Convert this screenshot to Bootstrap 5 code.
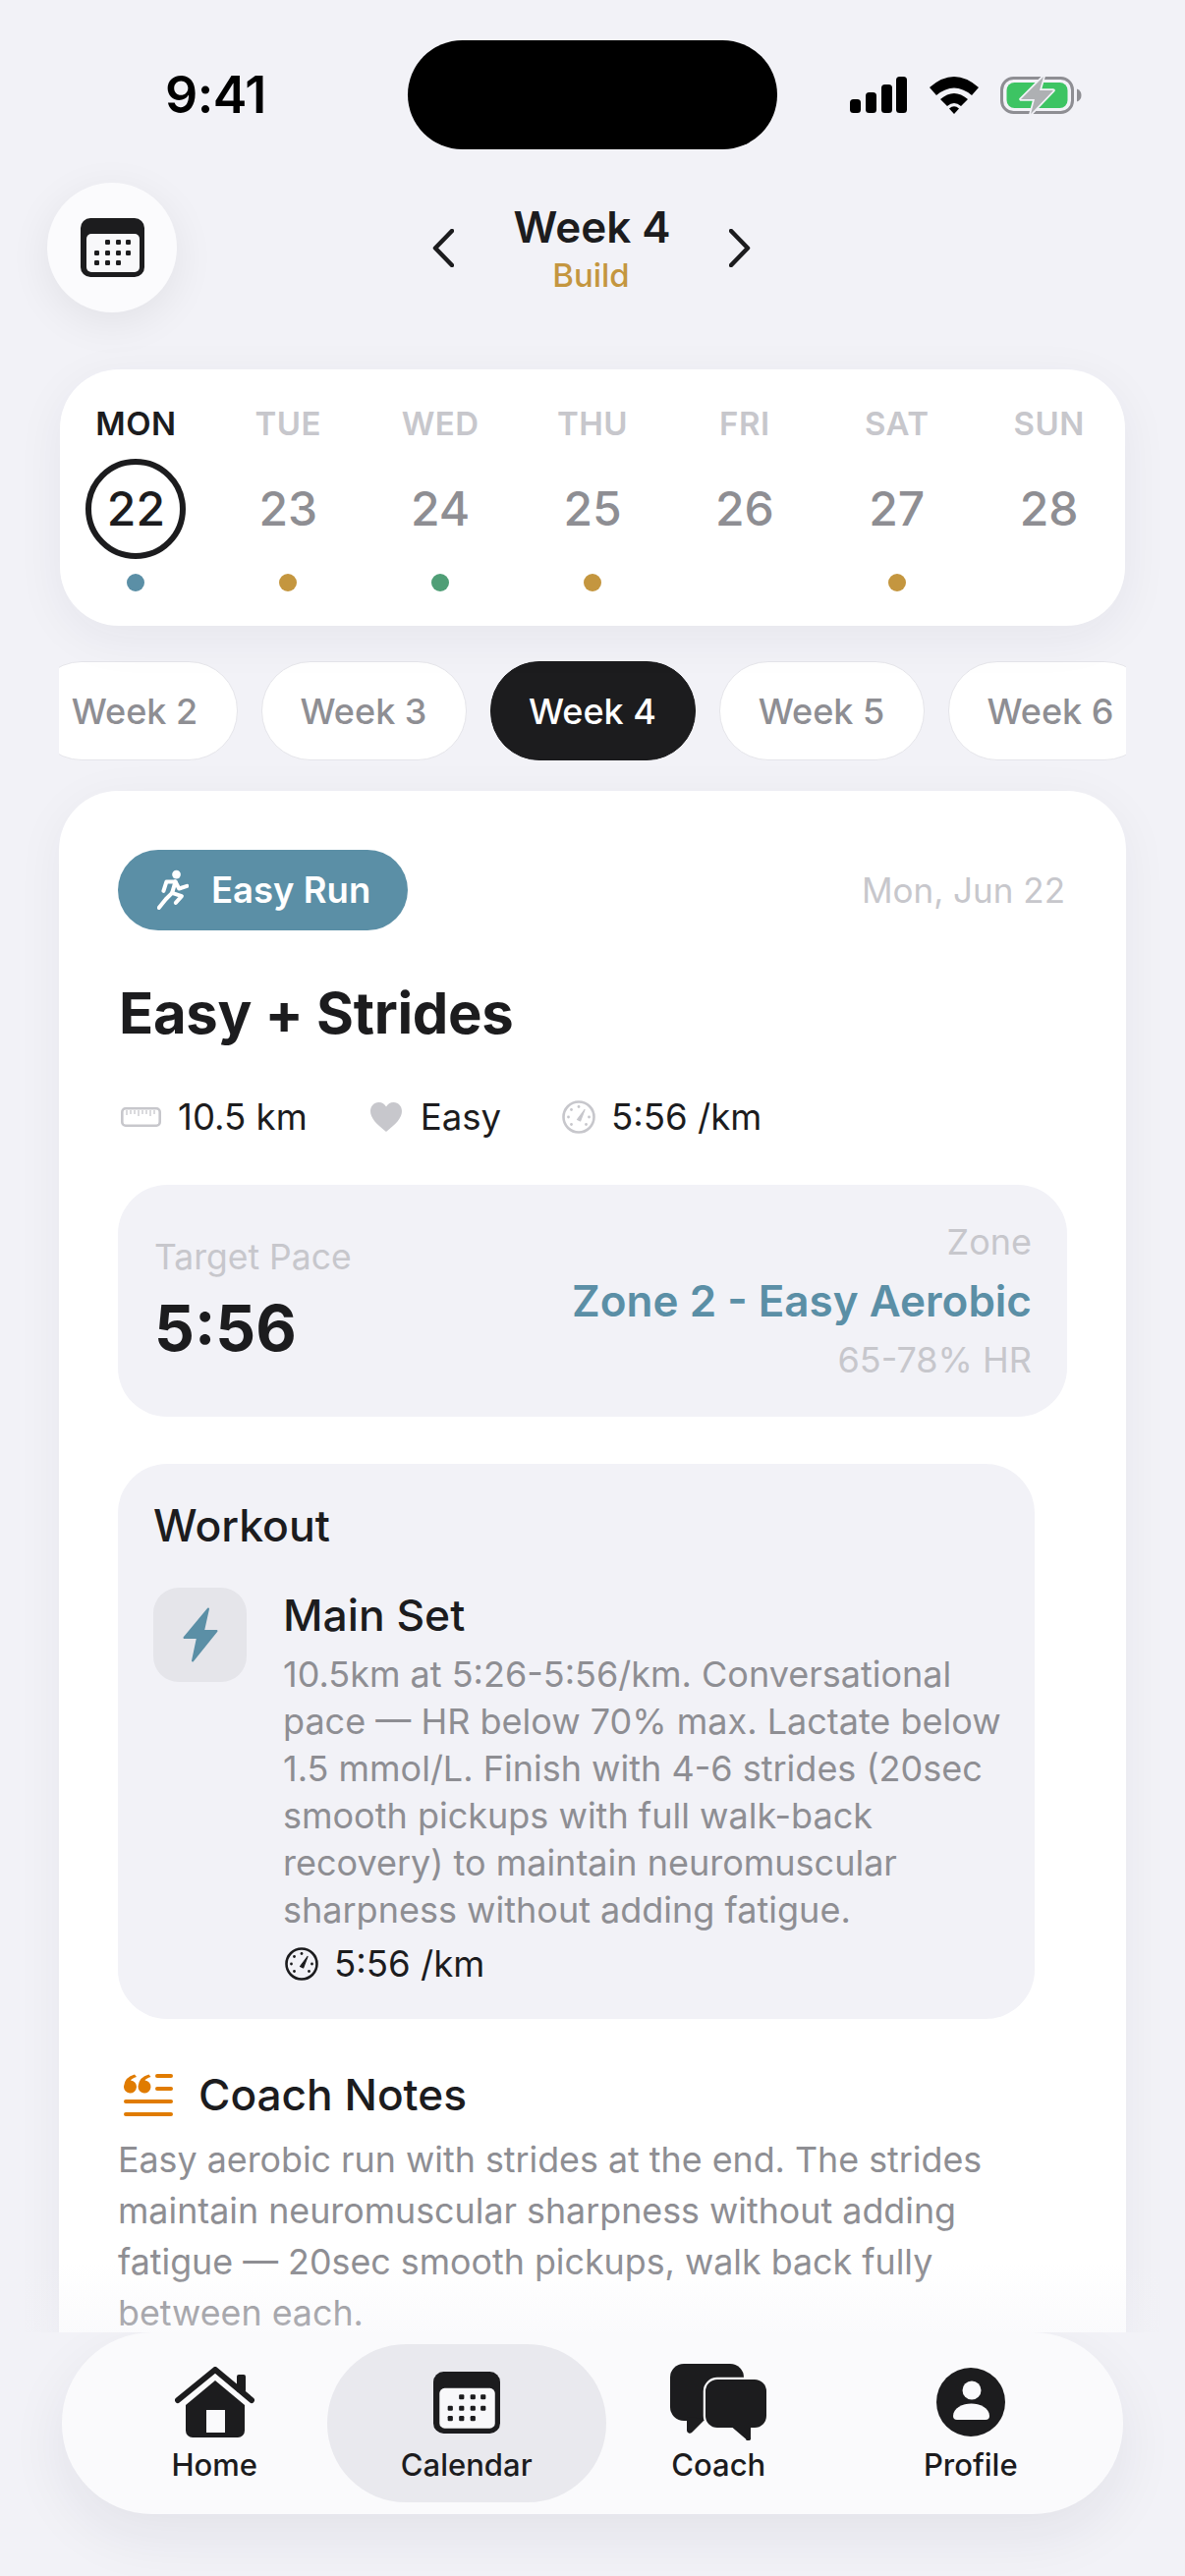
<!doctype html>
<html lang="en">
<head>
<meta charset="utf-8">
<title>Week 4 Calendar</title>
<link href="https://cdn.jsdelivr.net/npm/bootstrap@5.3.0/dist/css/bootstrap.min.css" rel="stylesheet">
<style>
html,body{margin:0;height:2622px;overflow:hidden}
body{background:#f2f2f7;font-family:Inter,"Noto Sans",sans-serif;color:#1c1c1e;width:1206px}
.phone{height:2622px;width:1206px}
.stat-row{padding-top:41px;height:152px}
.stat-time{width:415px;padding-left:168px;font-size:52px;font-weight:600;line-height:111px;letter-spacing:-.5px;color:#000;flex:none}
.island{width:376px;height:111px;background:#000;border-radius:56px;flex:none}
.stat-icons{padding-left:74px;height:111px;flex:none}
.head-row{margin-top:34px;display:grid;grid-template-columns:1fr auto 1fr;align-items:center;height:132px}
.cal-btn{width:132px;height:132px;margin-left:48px;background:#fbfbfd;box-shadow:0 10px 44px rgba(0,0,0,.07);border:0}
.head-mid{gap:61px;margin-left:-3px}
.wk-title{font-size:44px;font-weight:600;line-height:52px;margin:0}
.wk-sub{font-size:33px;font-weight:500;line-height:40px;color:#c4963f;margin-top:3px}
.week-card{margin:58px 61px 0;height:261px;padding:35px 0;background:#fff;border-radius:60px;box-shadow:0 12px 50px rgba(30,30,60,.06);border:0}
.day-col{flex:1 1 0;text-align:center}
.day-lbl{font-size:33px;line-height:40px;font-weight:600;letter-spacing:.5px;color:#c7c7cc;height:40px}
.day-lbl.on{color:#1c1c1e}
.day-num{width:102px;height:102px;margin:16px auto 0;font-size:48px;font-weight:500;line-height:90px;color:#8e8e93;border:6px solid transparent;border-radius:50%}
.day-num.on{color:#1c1c1e;border-color:#1c1c1e}
.day-dot{width:18px;height:18px;border-radius:50%;margin:15px auto 0}
.pill-strip{margin:36px 60px 0;gap:24px;overflow:hidden}
.wk-pill{flex:none;width:209px;height:101px;font-size:36px;font-weight:500;line-height:1;color:#8e8e93;background:#fff;border:1px solid #e5e5ea;border-radius:50px;padding:0}
.wk-pill.on{background:#1c1c1e;color:#fff;border-color:#1c1c1e}
.scroll-zone{height:2374px;overflow:hidden;position:relative}
.fade-over{position:absolute;left:0;right:0;bottom:0;height:70px;background:linear-gradient(rgba(242,242,247,0),rgba(242,242,247,.35));pointer-events:none}
.main-card{margin:31px 60px 0;padding:60px 60px 60px;background:#fff;border:0;border-radius:60px;box-shadow:0 10px 50px rgba(30,30,60,.05)}
.run-tag{height:82px;width:295px;padding-left:40px;gap:23px;border-radius:41px;background:#5b8fa6;color:#fff;font-size:36.5px;font-weight:600}
.date-txt{font-size:35px;color:#c7c7cc;margin-right:2px}
.ttl{font-size:58px;font-weight:700;line-height:70px;margin:49px 0 0;letter-spacing:-.3px;padding-left:1px}
.meta-row{margin-top:49px;height:44px;font-size:36.6px;line-height:44px;padding-left:3px}
.meta-a{gap:17px;margin-right:64px}
.pace-box{margin-top:47px;height:236px;padding:0 36px 0 37px;background:#f2f2f7;border-radius:50px}
.mute-lbl{font-size:35.5px;line-height:44px;color:#c7c7cc}
.pace-val{font-size:64px;font-weight:700;line-height:76px;margin-top:12px}
.zone-r{line-height:60px;text-align:right}
.zone-r .mute-lbl{line-height:60px;font-size:36px}
.zone-name{font-size:44px;font-weight:600;color:#5b8fa6;line-height:60px}
.wk-box{margin-top:48px;width:933px;padding:35px 24px 34px 36px;background:#f2f2f7;border-radius:50px}
.wk-h{font-size:44.5px;font-weight:500;line-height:56px;margin:0}
.set-row{margin-top:35px;gap:37px}
.set-ico{width:95px;height:96px;border-radius:26px;background:#e5e5ea;flex:none}
.set-h{font-size:44.4px;font-weight:500;line-height:56px;margin:0}
.set-txt{font-size:36px;line-height:48px;color:#8e8e93;margin:8px 0 0}
.set-pace{margin-top:9px;font-size:36.6px;line-height:44px;gap:16px;padding-left:2px}
.note-row{margin-top:49px;height:56px;gap:26px;padding-left:6px}
.note-h{font-size:44.2px;font-weight:500;line-height:56px;margin:0}
.note-txt{font-size:35.8px;line-height:52px;color:#8e8e93;margin:12px 0 0;width:940px}
.nav-zone{height:248px}
.tab-bar{margin:0 63px;height:185px;padding:12px 27px;background:#fafafc;border-radius:92px;box-shadow:0 22px 60px rgba(30,30,60,.07);display:grid;grid-template-columns:repeat(4,1fr)}
.tab-it{padding:19px 0 0;color:#1c1c1e;font-size:31px;font-weight:500;line-height:36px;border-radius:80px;text-decoration:none}
.tab-it.on{background:#e9e9ee;margin:0 -14px}
.tab-ico{height:80px;margin-bottom:6px}
</style>
</head>
<body>
<svg width="0" height="0" class="d-block position-absolute">
  <defs>
    <symbol id="cal" viewBox="0 0 65 60">
      <rect width="65" height="60" rx="10" fill="#1c1c1e"/>
      <rect x="6" y="16" width="54" height="39" rx="5" fill="#f8f8fa"/>
      <g fill="#1c1c1e">
        <rect x="25" y="22" width="5" height="5" rx="1.2"/><rect x="36" y="22" width="5" height="5" rx="1.2"/><rect x="46" y="22" width="5" height="5" rx="1.2"/>
        <rect x="14" y="33" width="5" height="5" rx="1.2"/><rect x="25" y="33" width="5" height="5" rx="1.2"/><rect x="36" y="33" width="5" height="5" rx="1.2"/><rect x="46" y="33" width="5" height="5" rx="1.2"/>
        <rect x="14" y="43" width="5" height="5" rx="1.2"/><rect x="25" y="43" width="5" height="5" rx="1.2"/><rect x="36" y="43" width="5" height="5" rx="1.2"/>
      </g>
    </symbol>
    <symbol id="gauge" viewBox="0 0 34 34">
      <circle cx="17" cy="17" r="15.5" fill="none" stroke="currentColor" stroke-width="2.6"/>
      <path d="M15.5 19.5 23 9.5 18.6 21Z" fill="currentColor" stroke="currentColor" stroke-width="1.2" stroke-linejoin="round"/>
      <g fill="currentColor"><circle cx="17" cy="6.5" r="1.4"/><circle cx="9.5" cy="9.5" r="1.4"/><circle cx="6.5" cy="17" r="1.4"/><circle cx="27.5" cy="17" r="1.4"/><circle cx="9.5" cy="24.5" r="1.4"/><circle cx="24.5" cy="24.5" r="1.4"/></g>
    </symbol>
  </defs>
</svg>

<div class="phone d-flex flex-column">
  <div class="scroll-zone flex-shrink-0">
    <div class="stat-row d-flex align-items-start">
      <div class="stat-time">9:41</div>
      <div class="island"></div>
      <div class="stat-icons d-flex align-items-center">
        <svg width="58" height="37" viewBox="0 0 58 37" class="d-block"><g fill="#000"><rect y="23" width="11" height="14" rx="3.5"/><rect x="16" y="16" width="11" height="21" rx="3.5"/><rect x="32" y="8" width="11" height="29" rx="3.5"/><rect x="47" y="0" width="11" height="37" rx="3.5"/></g></svg>
        <svg width="50" height="38" viewBox="0 0 50 38" class="d-block" style="margin-left:23px"><g fill="#000"><path d="M0 11Q25-11 50 11L43 19Q25 4 7 19Z"/><path d="M11 23Q25 11 39 23L32 30Q25 24 18 30Z"/><path d="M20 32.5Q25 28 30 32.5L25 38Z"/></g></svg>
        <svg width="84" height="40" viewBox="0 0 84 40" class="d-block" style="margin-left:22px">
          <rect x="1.5" y="2.5" width="72" height="35" rx="12" fill="none" stroke="#8e8e93" stroke-width="3"/>
          <path d="M78 13.5c3 1 4.5 3.5 4.5 6.5s-1.5 5.5-4.5 6.5Z" fill="#8e8e93"/>
          <rect x="6.5" y="7" width="62" height="26" rx="8" fill="#3dc463"/>
          <path d="M44 1 21 24H35L31 39 54 15H40Z" fill="#aeb0b3" stroke="#f2f2f7" stroke-width="3.5" stroke-linejoin="round" paint-order="stroke"/>
        </svg>
      </div>
    </div>

    <div class="head-row">
      <button type="button" class="btn cal-btn rounded-circle d-flex align-items-center justify-content-center p-0" aria-label="Calendar">
        <svg width="65" height="60"><use href="#cal"/></svg>
      </button>
      <div class="head-mid d-flex align-items-center">
        <svg width="22" height="39" viewBox="0 0 22 39" class="d-block"><path d="M20 2 3 19.5 20 37" fill="none" stroke="#1c1c1e" stroke-width="4.5" stroke-linecap="round" stroke-linejoin="round"/></svg>
        <div class="text-center" style="width:158px">
          <h1 class="wk-title text-nowrap">Week 4</h1>
          <div class="wk-sub">Build</div>
        </div>
        <svg width="22" height="39" viewBox="0 0 22 39" class="d-block"><path d="M2 2 19 19.5 2 37" fill="none" stroke="#1c1c1e" stroke-width="4.5" stroke-linecap="round" stroke-linejoin="round"/></svg>
      </div>
      <div></div>
    </div>

    <div class="card week-card flex-row">
      <div class="day-col"><div class="day-lbl on">MON</div><div class="day-num on">22</div><div class="day-dot" style="background:#5b8fa6"></div></div>
      <div class="day-col"><div class="day-lbl">TUE</div><div class="day-num">23</div><div class="day-dot" style="background:#c4963f"></div></div>
      <div class="day-col"><div class="day-lbl">WED</div><div class="day-num">24</div><div class="day-dot" style="background:#4f9e76"></div></div>
      <div class="day-col"><div class="day-lbl">THU</div><div class="day-num">25</div><div class="day-dot" style="background:#c4963f"></div></div>
      <div class="day-col"><div class="day-lbl">FRI</div><div class="day-num">26</div></div>
      <div class="day-col"><div class="day-lbl">SAT</div><div class="day-num">27</div><div class="day-dot" style="background:#c4963f"></div></div>
      <div class="day-col"><div class="day-lbl">SUN</div><div class="day-num">28</div></div>
    </div>

    <div class="pill-strip d-flex justify-content-center">
      <button type="button" class="btn wk-pill">Week 2</button>
      <button type="button" class="btn wk-pill">Week 3</button>
      <button type="button" class="btn wk-pill on">Week 4</button>
      <button type="button" class="btn wk-pill">Week 5</button>
      <button type="button" class="btn wk-pill">Week 6</button>
    </div>

    <div class="card main-card">
      <div class="d-flex justify-content-between align-items-center">
        <div class="run-tag d-flex align-items-center">
          <svg width="32" height="42" viewBox="150 75 95 125" class="d-block flex-shrink-0">
            <circle cx="208" cy="90" r="13" fill="#fff"/>
            <g fill="none" stroke="#fff" stroke-width="12" stroke-linecap="round" stroke-linejoin="round">
              <path d="M240 125 216 133 205 112H178L169 140"/>
              <path d="M205 112 195 146 176 165 155 191"/>
              <path d="M195 146 224 156 206 176"/>
            </g>
          </svg>
          <span>Easy Run</span>
        </div>
        <div class="date-txt">Mon, Jun 22</div>
      </div>

      <h2 class="ttl">Easy + Strides</h2>

      <div class="meta-row d-flex align-items-center">
        <div class="meta-a d-flex align-items-center">
          <svg width="41" height="20" viewBox="0 0 41 20" class="d-block"><rect x="1.3" y="1.3" width="38.4" height="17.4" rx="3.5" fill="none" stroke="#c7c7cc" stroke-width="2.6"/><path d="M6 3V8M10 3V7M14 3V7M18 3V9M22 3V7M26 3V7M30 3V9M34 3V7" stroke="#c7c7cc" stroke-width="1.3"/></svg>
          <span>10.5 km</span>
        </div>
        <div class="meta-a d-flex align-items-center" style="gap:19px;margin-right:62px">
          <svg width="32" height="30" viewBox="0 0 32 30" class="d-block"><path d="M16 30C6 22 0 16 0 9 0 4 3.5 0 8.5 0 12 0 14.5 2 16 4.5 17.5 2 20 0 23.5 0 28.5 0 32 4 32 9 32 16 26 22 16 30Z" fill="#c7c7cc"/></svg>
          <span>Easy</span>
        </div>
        <div class="d-flex align-items-center" style="gap:16px;color:#c7c7cc">
          <svg width="34" height="34" class="d-block"><use href="#gauge"/></svg>
          <span style="color:#1c1c1e">5:56 /km</span>
        </div>
      </div>

      <div class="pace-box d-flex justify-content-between align-items-center">
        <div>
          <div class="mute-lbl">Target Pace</div>
          <div class="pace-val">5:56</div>
        </div>
        <div class="zone-r">
          <div class="mute-lbl">Zone</div>
          <div class="zone-name">Zone 2 - Easy Aerobic</div>
          <div class="mute-lbl">65-78% HR</div>
        </div>
      </div>

      <div class="wk-box">
        <h3 class="wk-h">Workout</h3>
        <div class="set-row d-flex align-items-start">
          <div class="set-ico d-flex align-items-center justify-content-center">
            <svg width="36" height="56" viewBox="0 0 36 56" class="d-block"><path d="M26 1.5 1.5 31H15L10 54.5 34.5 24H21Z" fill="#5b8fa6" stroke="#5b8fa6" stroke-width="2" stroke-linejoin="round"/></svg>
          </div>
          <div class="flex-grow-1">
            <h4 class="set-h">Main Set</h4>
            <p class="set-txt">10.5km at 5:26-5:56/km. Conversational pace — HR below 70% max. Lactate below 1.5 mmol/L. Finish with 4-6 strides (20sec smooth pickups with full walk-back recovery) to maintain neuromuscular sharpness without adding fatigue.</p>
            <div class="set-pace d-flex align-items-center">
              <svg width="34" height="34" class="d-block"><use href="#gauge"/></svg>
              <span>5:56 /km</span>
            </div>
          </div>
        </div>
      </div>

      <div class="note-row d-flex align-items-center">
        <svg width="50" height="43" viewBox="0 0 50 43" class="d-block flex-shrink-0" fill="#e07b00">
          <path d="M11 .5Q1 3 0 12.5A6.5 6.5 0 1 0 7 6.5Q8 4.5 13 3Z"/>
          <path d="M25.5 .5Q15.500 3 14.500 12.500A6.500 6.500 0 1 0 21.500 6.500Q22.500 4.500 27.500 3Z"/>
          <rect x="32" y="0" width="18" height="4" rx="2"/><rect x="32" y="13" width="18" height="4" rx="2"/>
          <rect y="26" width="50" height="4" rx="2"/><rect y="39" width="50" height="4" rx="2"/>
        </svg>
        <h3 class="note-h">Coach Notes</h3>
      </div>
      <p class="note-txt">Easy aerobic run with strides at the end. The strides maintain neuromuscular sharpness without adding fatigue — 20sec smooth pickups, walk back fully between each.</p>
    </div>
    <div class="fade-over"></div>
  </div>

  <div class="nav-zone flex-shrink-0">
    <nav class="tab-bar">
      <a href="#" class="tab-it d-flex flex-column align-items-center">
        <span class="tab-ico d-flex align-items-center justify-content-center">
          <svg width="81" height="72" viewBox="0 0 81 72" class="d-block">
            <rect x="63" y="8" width="9" height="18" rx="2" fill="#1c1c1e"/>
            <path d="M3 34 41 3 78 34" fill="none" stroke="#1c1c1e" stroke-width="6" stroke-linecap="round" stroke-linejoin="round"/>
            <path d="M11 39 41 14 71 39V65A7 7 0 0 1 64 72H18A7 7 0 0 1 11 65Z" fill="#1c1c1e"/>
            <rect x="32" y="44" width="19" height="23" fill="#fafafc"/>
          </svg>
        </span>
        <span>Home</span>
      </a>
      <a href="#" class="tab-it on d-flex flex-column align-items-center">
        <span class="tab-ico d-flex align-items-center justify-content-center">
          <svg width="68" height="63"><use href="#cal"/></svg>
        </span>
        <span>Calendar</span>
      </a>
      <a href="#" class="tab-it d-flex flex-column align-items-center">
        <span class="tab-ico d-flex align-items-center justify-content-center">
          <svg width="98" height="78" viewBox="0 0 98 78" class="d-block">
            <rect width="75" height="58" rx="14" fill="#1c1c1e"/>
            <path d="M17 54V68A3 3 0 0 0 22 70L36 56Z" fill="#1c1c1e"/>
            <rect x="36" y="16" width="62" height="49" rx="12" fill="#1c1c1e" stroke="#fafafc" stroke-width="4.5" paint-order="stroke"/>
            <path d="M60 62 77 76.5A2.5 2.5 0 0 0 82 75V62Z" fill="#1c1c1e"/>
          </svg>
        </span>
        <span>Coach</span>
      </a>
      <a href="#" class="tab-it d-flex flex-column align-items-center">
        <span class="tab-ico d-flex align-items-center justify-content-center">
          <svg width="70" height="70" viewBox="0 0 70 70" class="d-block">
            <circle cx="35" cy="35" r="35" fill="#1c1c1e"/>
            <circle cx="36" cy="23" r="9.5" fill="#fafafc"/>
            <path d="M17 49C17 41 27 36.5 35.5 36.5S54 41 54 49A4 4 0 0 1 50 53H21A4 4 0 0 1 17 49Z" fill="#fafafc"/>
          </svg>
        </span>
        <span>Profile</span>
      </a>
    </nav>
  </div>
</div>
</body>
</html>
